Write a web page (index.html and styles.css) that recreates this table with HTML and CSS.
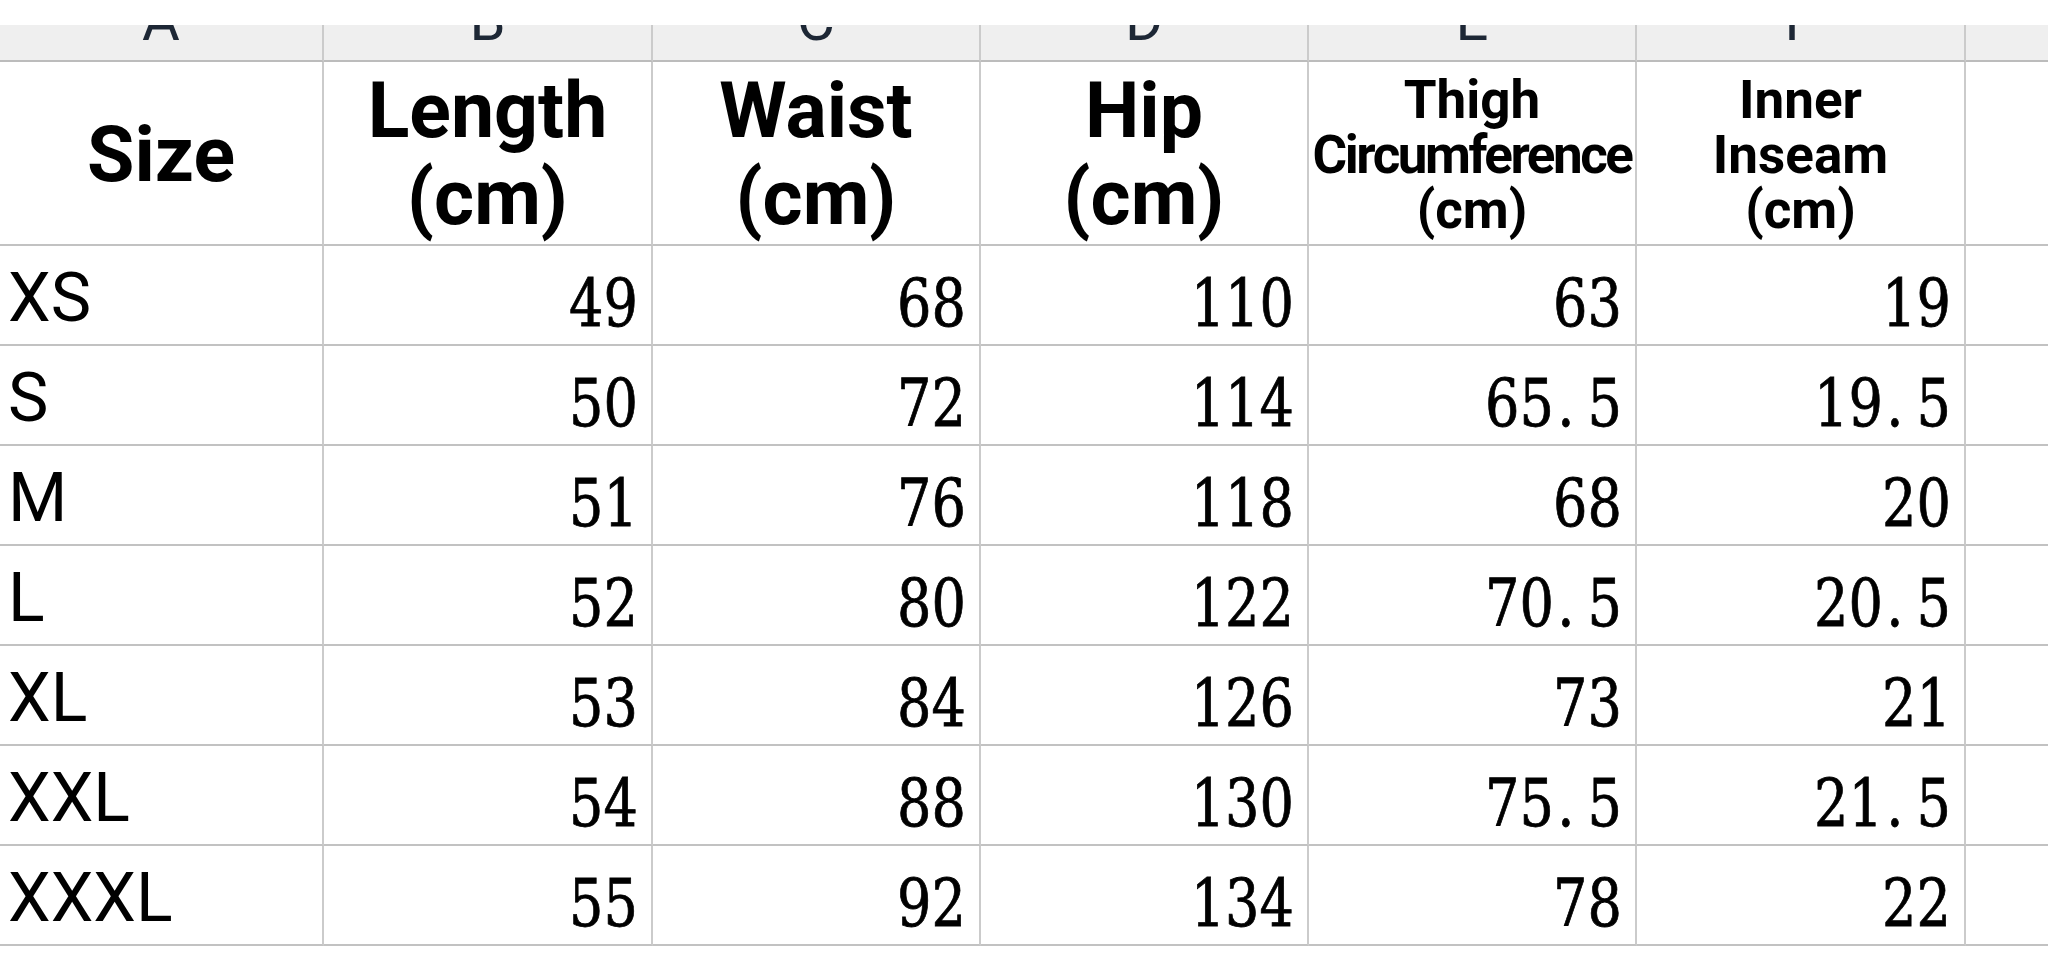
FILE: index.html
```html
<!DOCTYPE html>
<html lang="en">
<head>
<meta charset="utf-8">
<title>Size chart</title>
<link rel="stylesheet" href="styles.css">
</head>
<body>
<div class="sheet">
  <div class="topband"></div>
  <div class="grid">
    <div class="colhead"><span>A</span></div>
    <div class="colhead"><span>B</span></div>
    <div class="colhead"><span>C</span></div>
    <div class="colhead"><span>D</span></div>
    <div class="colhead"><span>E</span></div>
    <div class="colhead"><span>F</span></div>
    <div class="colhead"><span>G</span></div>

    <div class="head"><span class="big">Size</span></div>
    <div class="head"><span>Length<br>(cm)</span></div>
    <div class="head"><span>Waist<br>(cm)</span></div>
    <div class="head"><span>Hip<br>(cm)</span></div>
    <div class="head small"><span>Thigh<br><span class="tight">Circumference</span><br>(cm)</span></div>
    <div class="head small"><span>Inner<br>Inseam<br>(cm)</span></div>
    <div class="head"></div>

    <div class="label">XS</div>
    <div class="num"><span>49</span></div>
    <div class="num"><span>68</span></div>
    <div class="num"><span>110</span></div>
    <div class="num"><span>63</span></div>
    <div class="num"><span>19</span></div>
    <div class="num"></div>

    <div class="label">S</div>
    <div class="num"><span>50</span></div>
    <div class="num"><span>72</span></div>
    <div class="num"><span>114</span></div>
    <div class="num"><span>65<span class="dot">.</span>5</span></div>
    <div class="num"><span>19<span class="dot">.</span>5</span></div>
    <div class="num"></div>

    <div class="label">M</div>
    <div class="num"><span>51</span></div>
    <div class="num"><span>76</span></div>
    <div class="num"><span>118</span></div>
    <div class="num"><span>68</span></div>
    <div class="num"><span>20</span></div>
    <div class="num"></div>

    <div class="label">L</div>
    <div class="num"><span>52</span></div>
    <div class="num"><span>80</span></div>
    <div class="num"><span>122</span></div>
    <div class="num"><span>70<span class="dot">.</span>5</span></div>
    <div class="num"><span>20<span class="dot">.</span>5</span></div>
    <div class="num"></div>

    <div class="label">XL</div>
    <div class="num"><span>53</span></div>
    <div class="num"><span>84</span></div>
    <div class="num"><span>126</span></div>
    <div class="num"><span>73</span></div>
    <div class="num"><span>21</span></div>
    <div class="num"></div>

    <div class="label">XXL</div>
    <div class="num"><span>54</span></div>
    <div class="num"><span>88</span></div>
    <div class="num"><span>130</span></div>
    <div class="num"><span>75<span class="dot">.</span>5</span></div>
    <div class="num"><span>21<span class="dot">.</span>5</span></div>
    <div class="num"></div>

    <div class="label">XXXL</div>
    <div class="num"><span>55</span></div>
    <div class="num"><span>92</span></div>
    <div class="num"><span>134</span></div>
    <div class="num"><span>78</span></div>
    <div class="num"><span>22</span></div>
    <div class="num"></div>
  </div>
</div>
</body>
</html>
```

FILE: styles.css
```css
html, body {
  margin: 0;
  padding: 0;
  background: #ffffff;
}

.sheet {
  width: 2048px;
  height: 970px;
  overflow: hidden;
  background: #ffffff;
}

.topband {
  height: 25px;
  background: #ffffff;
}

.grid {
  display: grid;
  grid-template-columns: 324px 329px 328px 328px 328px 329px 328px;
  grid-template-rows: 37px 184px repeat(7, 100px);
  width: 2294px;
}

.grid > div {
  box-sizing: border-box;
  border-right: 2px solid #cbcbcb;
  border-bottom: 2px solid #c2c2c2;
  min-width: 0;
}

.colhead {
  background: #efefef;
  overflow: hidden;
  text-align: center;
  border-bottom-color: #bcbcbc !important;
}

.colhead span {
  display: block;
  font-family: Roboto, "Liberation Sans", sans-serif;
  font-size: 58px;
  line-height: 1;
  color: #1d2735;
  margin-top: -34px;
}

.head {
  display: flex;
  align-items: center;
  justify-content: center;
  text-align: center;
  font-family: Roboto, "Liberation Sans", sans-serif;
  font-weight: 700;
  font-size: 77px;
  line-height: 87px;
  color: #000000;
  padding-top: 4px;
}

.head .big {
  font-size: 77px;
  line-height: 1;
}

.head.small {
  font-size: 53px;
  line-height: 55px;
}

.head .tight {
  letter-spacing: -2.5px;
}

.label {
  display: flex;
  align-items: center;
  padding-left: 8px;
  padding-top: 6px;
  font-family: Roboto, "Liberation Sans", sans-serif;
  font-size: 68px;
  line-height: 1;
  color: #000000;
}

.num {
  display: flex;
  align-items: center;
  justify-content: flex-end;
  padding-right: 13px;
  padding-top: 18px;
}

.num > span {
  display: inline-block;
  font-family: "DejaVu Serif", "Liberation Serif", serif;
  font-size: 66px;
  line-height: 1;
  color: #000000;
  white-space: nowrap;
  transform: scaleX(0.82);
  transform-origin: right center;
  -webkit-text-stroke: 0.8px #000000;
}

.num .dot {
  display: inline-block;
  width: 0.62em;
  text-align: left;
  padding-left: 0.06em;
  box-sizing: border-box;
}
```
